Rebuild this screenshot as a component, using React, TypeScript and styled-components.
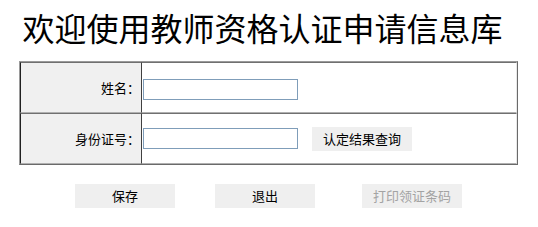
import React from 'react';
import styled, { createGlobalStyle } from 'styled-components';

const GlobalStyle = createGlobalStyle`
  html, body {
    margin: 0;
    padding: 0;
    background: #ffffff;
  }
  body {
    font-family: "Noto Sans CJK SC", "Noto Sans", sans-serif;
    color: #000;
  }
`;

const Page = styled.div`
  width: 538px;
  height: 227px;
  overflow: hidden;
`;

const Title = styled.h1`
  margin: 0;
  padding: 11px 13px 0 0;
  height: 33px;
  line-height: 33px;
  font-size: 32px;
  font-weight: 400;
  text-align: center;
  white-space: nowrap;
`;

const FormTable = styled.table`
  width: 499px;
  margin: 17px 0 0 19px;
  border-collapse: separate;
  border-spacing: 0;
  border: 1px solid;
  border-color: #9a9a9a #6a6a6a #6a6a6a #9a9a9a;
`;

const Row = styled.tr<{ $height: number }>`
  height: ${(p) => p.$height}px;
`;

const LabelCell = styled.td`
  width: 118px;
  padding: 1px;
  background: #f0f0f0;
  text-align: right;
  vertical-align: middle;
  font-size: 13px;
  border: 1px solid;
  border-color: #707070 #404040 #b0b0b0 #202020;
`;

const ValueCell = styled.td`
  padding: 1px;
  background: #ffffff;
  vertical-align: middle;
  border: 1px solid;
  border-left: none;
  border-color: #707070 #e8e8e8 #b0b0b0 #202020;
`;

const Field = styled.div`
  display: flex;
  align-items: center;
  gap: 14px;
`;

const TextInput = styled.input`
  box-sizing: border-box;
  width: 155px;
  height: 21px;
  margin: 0;
  padding: 1px 2px;
  border: 1px solid #7f9db9;
  background: #fff;
  font-family: inherit;
  font-size: 12px;
  outline: none;
`;

const Button = styled.button`
  box-sizing: border-box;
  width: 100px;
  height: 24px;
  margin: 0;
  padding: 0;
  border: none;
  background: #efefef;
  color: #000;
  font-family: inherit;
  font-size: 13px;
  line-height: 24px;
  cursor: pointer;

  &:disabled {
    color: #a3a3a3;
    cursor: default;
  }
`;

const Actions = styled.div`
  display: flex;
  margin-top: 17px;
  padding-left: 75px;
`;

const ActionSlot = styled.div<{ $gap: number }>`
  margin-left: ${(p) => p.$gap}px;
`;

export default function App() {
  return (
    <Page>
      <GlobalStyle />
      <Title>欢迎使用教师资格认证申请信息库</Title>
      <FormTable>
        <tbody>
          <Row $height={51}>
            <LabelCell>姓名：</LabelCell>
            <ValueCell>
              <TextInput type="text" />
            </ValueCell>
          </Row>
          <Row $height={51}>
            <LabelCell>身份证号：</LabelCell>
            <ValueCell>
              <Field>
                <TextInput type="text" />
                <Button type="button">认定结果查询</Button>
              </Field>
            </ValueCell>
          </Row>
        </tbody>
      </FormTable>
      <Actions>
        <ActionSlot $gap={0}>
          <Button type="button">保存</Button>
        </ActionSlot>
        <ActionSlot $gap={40}>
          <Button type="button">退出</Button>
        </ActionSlot>
        <ActionSlot $gap={47}>
          <Button type="button" disabled>
            打印领证条码
          </Button>
        </ActionSlot>
      </Actions>
    </Page>
  );
}
